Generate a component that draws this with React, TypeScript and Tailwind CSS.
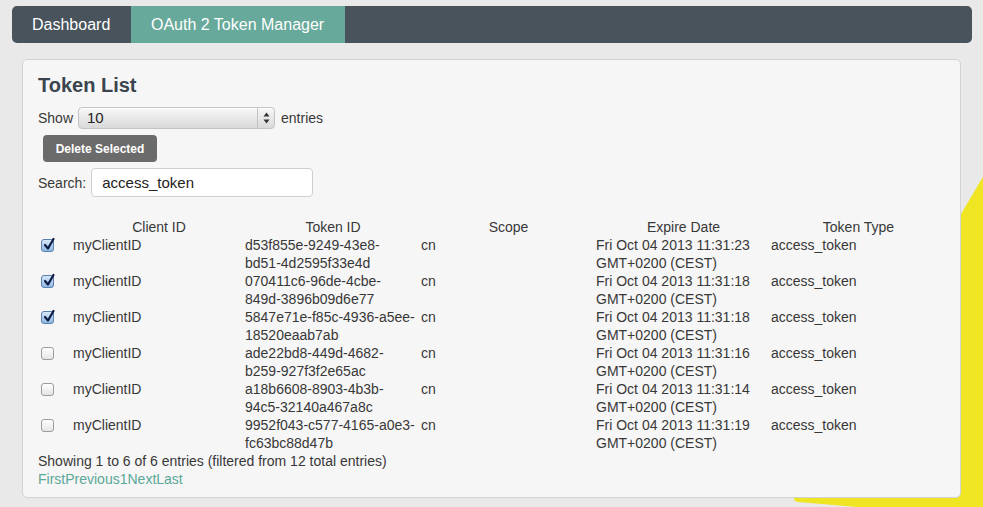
import React from "react";

const rows = [
  { checked: true, t1: "d53f855e-9249-43e8-", t2: "bd51-4d2595f33e4d", time: "11:31:23" },
  { checked: true, t1: "070411c6-96de-4cbe-", t2: "849d-3896b09d6e77", time: "11:31:18" },
  { checked: true, t1: "5847e71e-f85c-4936-a5ee-", t2: "18520eaab7ab", time: "11:31:18" },
  { checked: false, t1: "ade22bd8-449d-4682-", t2: "b259-927f3f2e65ac", time: "11:31:16" },
  { checked: false, t1: "a18b6608-8903-4b3b-", t2: "94c5-32140a467a8c", time: "11:31:14" },
  { checked: false, t1: "9952f043-c577-4165-a0e3-", t2: "fc63bc88d47b", time: "11:31:19" },
];

function Check({ checked }: { checked: boolean }) {
  if (checked) {
    return (
      <div className="w-[13px] h-[13px] rounded-[3px] border border-[#5b7fae] bg-gradient-to-b from-[#d6e8fa] to-[#8fb8e4] relative">
        <svg width="15" height="15" viewBox="0 0 15 15" className="absolute left-[0px] top-[-3px]">
          <path d="M3 8 L6 11.5 L11.5 2" fill="none" stroke="#0d1a45" strokeWidth="2.2" strokeLinecap="round" strokeLinejoin="round" />
        </svg>
      </div>
    );
  }
  return (
    <div className="w-[13px] h-[13px] rounded-[3px] border border-[#9c9c9c] bg-gradient-to-b from-[#ffffff] to-[#e4e4e4]" />
  );
}

export default function App() {
  return (
    <div className="relative min-h-[507px] h-[507px] overflow-hidden bg-[#e9e9e9] font-['Liberation_Sans',Arial,sans-serif] text-[14px] leading-[18px] text-[#383838]">
      <svg className="absolute left-0 top-0" width="983" height="507" viewBox="0 0 983 507">
        <path d="M1010 131 L795 495 Q792 501 798 502 L1010 520 Z" fill="#f0e523" />
      </svg>

      <div className="relative pt-[6px] pl-[12px] pr-[11px]">
        <div className="flex h-[37px] rounded-[5px] bg-[#48535c] text-white text-[16px] overflow-hidden">
          <div className="flex items-center px-[20px] w-[119px]">Dashboard</div>
          <div className="flex items-center px-[20px] w-[214px] bg-[#67a99a]">OAuth 2 Token Manager</div>
        </div>
      </div>

      <div className="relative z-10 mt-[16px] ml-[22px] mr-[22px] h-[439px] rounded-[5px] border border-[#d3d3d3] bg-[#f6f6f6] pl-[15px] pt-[13px]">
        <div className="text-[20px] leading-[24px] font-bold text-[#3a444e]">Token List</div>

        <div className="flex items-center mt-[10px] h-[22px]">
          <span>Show</span>
          <div className="ml-[5px] flex items-center w-[197px] h-[22px] rounded-[4px] border border-[#c4c4c4] bg-gradient-to-b from-[#f7f7f7] to-[#d9d9d9] shadow-[inset_0_1px_0_#fff]">
            <span className="flex-1 pl-[8px] text-[15px] text-[#222]">10</span>
            <div className="w-[17px] h-full border-l border-[#c4c4c4] flex flex-col items-center justify-center gap-[1px]">
              <svg width="7" height="12" viewBox="0 0 7 12">
                <path d="M3.5 0.5 L6.5 4.5 L0.5 4.5 Z" fill="#333" />
                <path d="M3.5 11.5 L6.5 7.5 L0.5 7.5 Z" fill="#333" />
              </svg>
            </div>
          </div>
          <span className="ml-[6px]">entries</span>
        </div>

        <button className="mt-[6px] ml-[5px] w-[114px] h-[27px] rounded-[4px] bg-[#6b6b6b] text-white text-[12px] font-bold flex items-center justify-center">
          Delete Selected
        </button>

        <div className="flex items-center mt-[6px]">
          <span>Search:</span>
          <div className="ml-[5px] w-[222px] h-[29px] rounded-[4px] border border-[#cfcfcf] bg-white flex items-center pl-[10px] text-[15px] text-[#222]">
            access_token
          </div>
        </div>

        <table className="mt-[21px] table-fixed border-collapse w-[908px]">
          <colgroup>
            <col className="w-[35px]" />
            <col className="w-[172px]" />
            <col className="w-[176px]" />
            <col className="w-[175px]" />
            <col className="w-[175px]" />
            <col className="w-[175px]" />
          </colgroup>
          <thead>
            <tr className="h-[18px]">
              <th className="p-0 font-normal"></th>
              <th className="p-0 font-normal text-center">Client ID</th>
              <th className="p-0 font-normal text-center">Token ID</th>
              <th className="p-0 font-normal text-center">Scope</th>
              <th className="p-0 font-normal text-center">Expire Date</th>
              <th className="p-0 font-normal text-center">Token Type</th>
            </tr>
          </thead>
          <tbody>
            {rows.map((r, i) => (
              <tr key={i} className="h-[36px] align-top">
                <td className="p-0">
                  <div className="pl-[3px] pt-[3px]">
                    <Check checked={r.checked} />
                  </div>
                </td>
                <td className="p-0">myClientID</td>
                <td className="p-0">
                  <div>{r.t1}</div>
                  <div>{r.t2}</div>
                </td>
                <td className="p-0">cn</td>
                <td className="p-0">
                  <div>Fri Oct 04 2013 {r.time}</div>
                  <div>GMT+0200 (CEST)</div>
                </td>
                <td className="p-0">access_token</td>
              </tr>
            ))}
          </tbody>
        </table>

        <div>Showing 1 to 6 of 6 entries (filtered from 12 total entries)</div>
        <div className="text-[#5ba898]">
          <span>First</span>
          <span>Previous</span>
          <span>1</span>
          <span>Next</span>
          <span>Last</span>
        </div>
      </div>
    </div>
  );
}
